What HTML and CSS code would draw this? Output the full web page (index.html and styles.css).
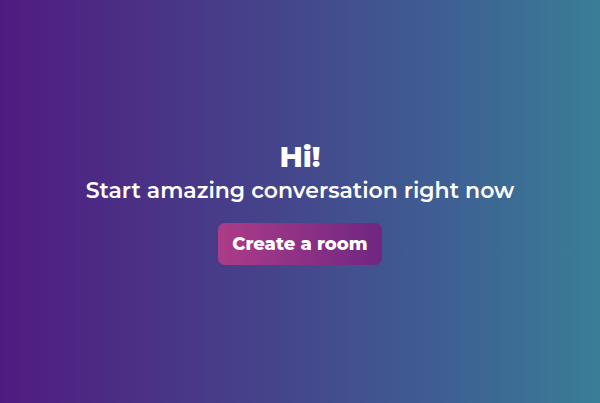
FILE: index.html
```html
<!DOCTYPE html>
<html lang="en">
<head>
<meta charset="utf-8">
<meta name="viewport" content="width=device-width, initial-scale=1">
<title>Start a conversation</title>
<link rel="stylesheet" href="styles.css">
</head>
<body>
<main class="welcome">
  <h1 class="title">Hi!</h1>
  <p class="subtitle">Start amazing conversation right now</p>
  <button class="create-button" type="button">Create a room</button>
</main>
</body>
</html>
```
FILE: styles.css
```css
* {
  box-sizing: border-box;
}

body {
  margin: 0;
  font-family: Montserrat, "Open Sans", sans-serif;
  color: #fff;
}

.welcome {
  min-height: 100vh;
  display: flex;
  flex-direction: column;
  align-items: center;
  justify-content: center;
  padding: 4px 16px;
  text-align: center;
  background: linear-gradient(to right, #501b80, #4a3286 25%, #44488c 50%, #3e6094 75%, #3a7e96);
}

.title {
  margin: 0;
  font-size: 29px;
  line-height: 36px;
  font-weight: 800;
}

.subtitle {
  margin: 0 0 16px;
  font-size: 22px;
  line-height: 32px;
  font-weight: 600;
}

.create-button {
  border: 0;
  border-radius: 7px;
  padding: 8px 14px;
  font: inherit;
  font-size: 18px;
  line-height: 26px;
  font-weight: 800;
  color: #fff;
  background: linear-gradient(to right, #ac3c88, #702682);
  cursor: pointer;
}
```
